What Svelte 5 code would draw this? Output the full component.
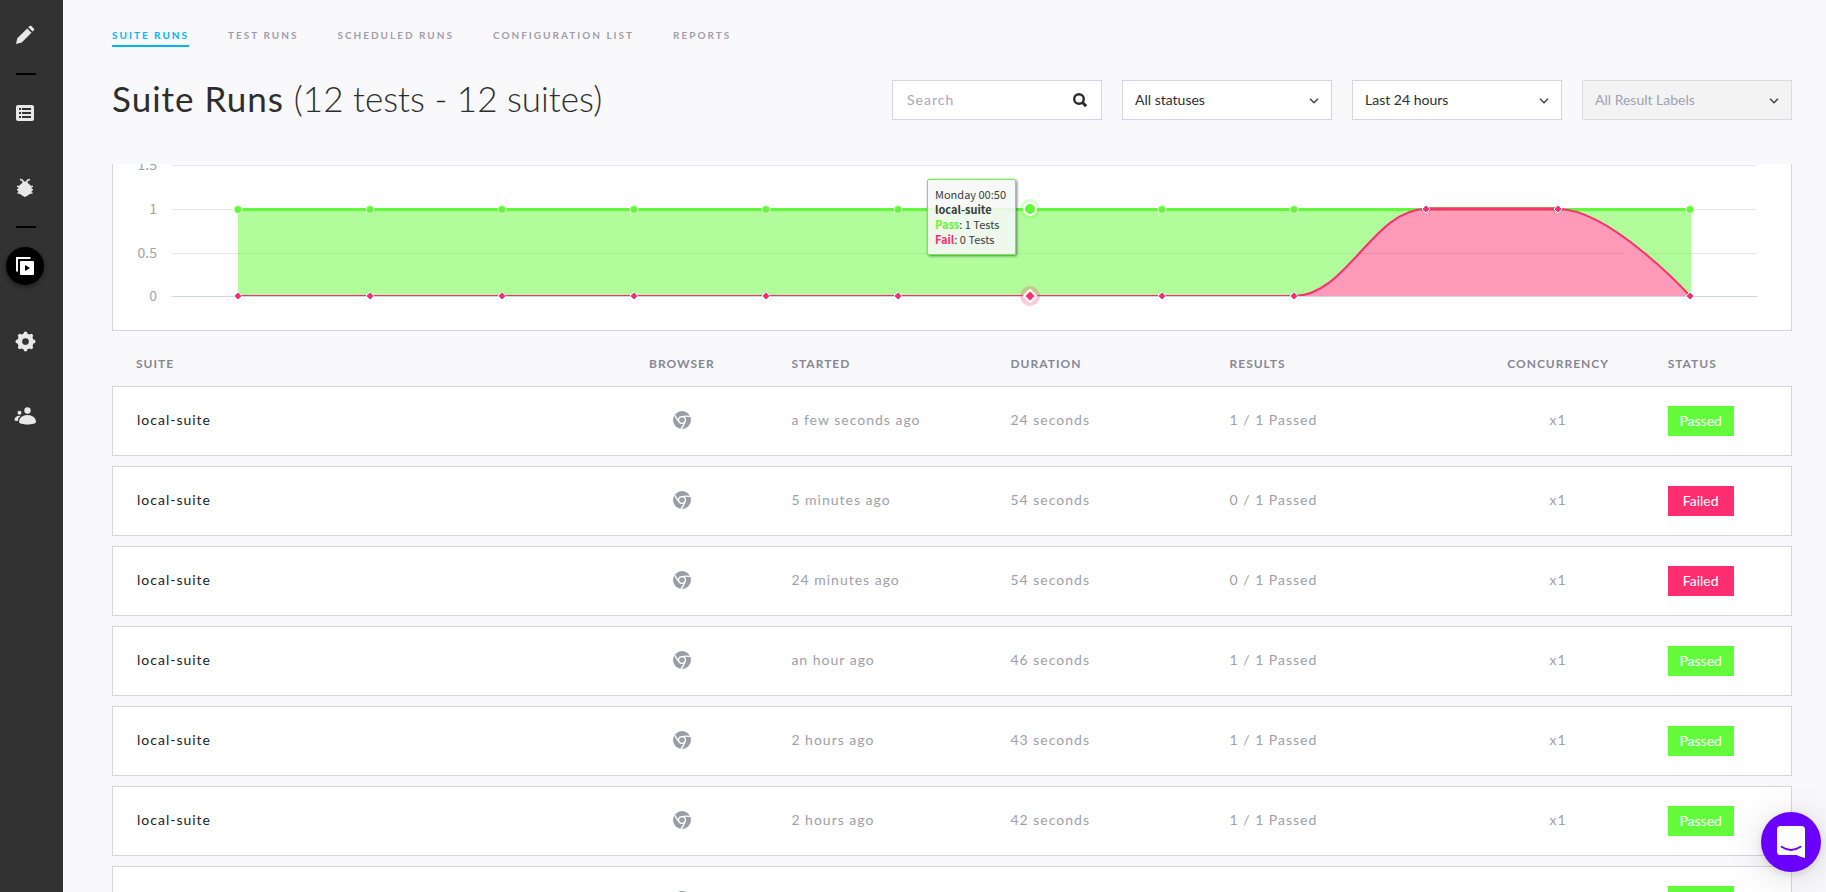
<script>
  const tabs = ['Suite Runs', 'Test Runs', 'Scheduled Runs', 'Configuration List', 'Reports'];

  const runs = [
    { suite: 'local-suite', started: 'a few seconds ago', duration: '24 seconds', results: '1 / 1 Passed', status: 'Passed' },
    { suite: 'local-suite', started: '5 minutes ago', duration: '54 seconds', results: '0 / 1 Passed', status: 'Failed' },
    { suite: 'local-suite', started: '24 minutes ago', duration: '54 seconds', results: '0 / 1 Passed', status: 'Failed' },
    { suite: 'local-suite', started: 'an hour ago', duration: '46 seconds', results: '1 / 1 Passed', status: 'Passed' },
    { suite: 'local-suite', started: '2 hours ago', duration: '43 seconds', results: '1 / 1 Passed', status: 'Passed' },
    { suite: 'local-suite', started: '2 hours ago', duration: '42 seconds', results: '1 / 1 Passed', status: 'Passed' },
    { suite: 'local-suite', started: '3 hours ago', duration: '43 seconds', results: '1 / 1 Passed', status: 'Passed' }
  ];

  // Chart geometry: the plot stretches with the panel, one slot per run.
  const fails = [0, 0, 0, 0, 0, 0, 0, 0, 0, 1, 1, 0];
  const hovered = 6;
  const plotLeft = 59;
  const one = 45;
  const zero = 132;
  const ticks = [
    { label: '1.5', y: 1 },
    { label: '1', y: 45 },
    { label: '0.5', y: 89 },
    { label: '0', y: 132 }
  ];

  let width = $state(1678);
  let plotRight = $derived(width - 34);
  let slot = $derived(Math.floor((plotRight - plotLeft) / fails.length));
  let points = $derived(
    fails.map((f, i) => ({ x: plotLeft + slot * (i + 0.5), y: f ? one : zero }))
  );
  let first = $derived(points[0].x);
  let last = $derived(points[points.length - 1].x);
  let failLine = $derived(
    points
      .map((p, i) => {
        if (i === 0) return `M${p.x} ${p.y}`;
        const q = points[i - 1];
        const c = slot * 0.4;
        const endX = i === points.length - 1 ? p.x : p.x - c;
        return `C${q.x + c} ${q.y} ${endX} ${p.y} ${p.x} ${p.y}`;
      })
      .join(' ')
  );
</script>

<div class="app">
  <nav class="sidebar" aria-label="Main">
    <div class="group">
      <button aria-label="Edit">
        <svg width="20" height="20" viewBox="0 0 20 20"><path fill="#e8e8e8" d="M1 19l1.300-5.800L12.200 3.400l4.300 4.300L6.700 17.500z M13.300 2.300l1.200-1.200q.9-.7 1.800 0l2.500 2.500q.8.9 0 1.800l-1.200 1.200z" /></svg>
      </button>
    </div>
    <hr />
    <div class="group">
      <button aria-label="Tests">
        <svg width="18" height="16" viewBox="0 0 18 16">
          <rect width="18" height="16" rx="2" fill="#e8e8e8" />
          <path stroke="#323232" stroke-width="2" d="M3 4h2M6 4h9M3 8h2M6 8h9M3 12h2M6 12h9" />
          <path stroke="#e8e8e8" d="M5.500 2v12" />
        </svg>
      </button>
      <button aria-label="Bugs">
        <svg width="18" height="20" viewBox="0 0 18 20">
          <path fill="#e8e8e8" d="M9 3.500c2 0 3 1 3.500 2.300C14.500 7 16 9 16 12c0 3.500-4 5.500-7 7-3-1.500-7-3.500-7-7 0-3 1.500-5 3.500-6.200C6 4.500 7 3.500 9 3.500z" />
          <path stroke="#e8e8e8" stroke-width="1.600" fill="none" d="M4 1.500l2 .5 2 2.500M14 1.500l-2 .5-2 2.500M1 8.500h16M1 11.800h16M1.500 15h15" />
        </svg>
      </button>
    </div>
    <hr />
    <div class="group">
      <button class="current" aria-label="Runs">
        <svg width="18" height="18" viewBox="0 0 18 18">
          <path fill="none" stroke="#fff" stroke-width="2" d="M1 14.500V1h13.500" />
          <rect x="4" y="4" width="14" height="14" rx="1" fill="#fff" />
          <path fill="#000" d="M9 8l5 3-5 3z" />
        </svg>
      </button>
      <button aria-label="Settings">
        <svg width="21" height="21" viewBox="0 0 22 22">
          <g stroke="#e8e8e8" fill="none">
            <circle cx="11" cy="11" r="6" stroke-width="5" />
            <path stroke-width="4" stroke-linecap="round" d="M11 2.500v2M11 17.500v2M2.500 11h2M17.500 11h2M5 5l1.500 1.500M15.500 15.500L17 17M17 5l-1.500 1.500M6.500 15.500L5 17" />
          </g>
        </svg>
      </button>
      <button aria-label="Team">
        <svg width="22" height="18" viewBox="0 0 22 18" fill="#e8e8e8">
          <circle cx="13.500" cy="3.500" r="3.200" />
          <path d="M5 15c0-4 3.500-7 8.500-7s8.500 3 8.500 7c0 1.500-4 2.500-8.500 2.500S5 16.500 5 15z" />
          <circle cx="5.500" cy="5.800" r="2" />
          <path d="M.5 13c0-2.500 2-4.300 5-4.300l1 .2C4.800 10.300 4 12 3.800 14 2 14 .5 13.600.5 13z" />
        </svg>
      </button>
    </div>
  </nav>

  <main>
    <nav class="tabs" aria-label="Runs">
      {#each tabs as tab, i}
        <a href="#top" class:active={i === 0}>{tab}</a>
      {/each}
    </nav>

    <header>
      <h1>Suite Runs <span>(12 tests - 12 suites)</span></h1>
      <div class="filters">
        <label class="field">
          <input type="text" placeholder="Search" aria-label="Search" />
          <svg class="glass" width="14" height="14" viewBox="0 0 14 14" fill="none" stroke="#2b2b2b">
            <circle cx="6" cy="6" r="4.800" stroke-width="2.400" /><path stroke-width="3" d="M9.500 9.500l3.700 3.700" />
          </svg>
        </label>
        {#each ['All statuses', 'Last 24 hours', 'All Result Labels'] as name, i}
          <label class="field">
            <select aria-label={name} disabled={i === 2}><option>{name}</option></select>
            <svg class="chevron" width="10" height="6" viewBox="0 0 10 6" fill="none" stroke="#444" stroke-width="1.500"><path d="M1 .8l4 4 4-4" /></svg>
          </label>
        {/each}
      </div>
    </header>

    <div class="scroll">
      <section class="chart" bind:clientWidth={width}>
        <svg height="166" {width} role="img" aria-label="Passed and failed tests">
          {#each ticks as tick, i}
            {#if i < 3}
              <line x1={plotLeft} x2={plotRight} y1={tick.y + 0.5} y2={tick.y + 0.5} stroke="#e6e6e6" />
            {/if}
            <text x="44" y={tick.y + 5} text-anchor="end">{tick.label}</text>
          {/each}

          <path d="M{first} {one}H{last + 1}V{zero}H{first}z" fill="#64fc38" fill-opacity="0.5" />
          <path d="M{first} {one}H{last}" stroke="#62f93a" stroke-width="3" transform="translate(0 .5)" />
          <path d="{failLine}V{zero}H{first}z" fill="#ff9ab8" />
          <line x1={points[8].x + slot / 2} x2={points[11].x - slot / 2} y1="89.500" y2="89.500" stroke="#ee88a8" />
          <path d="M{points[9].x} {one}H{points[10].x}" stroke="#cf7a62" stroke-width="4" />
          <path d={failLine} fill="none" stroke="#ff2e70" stroke-width="2" />
          <line x1={plotLeft} x2={plotRight} y1={zero + 0.5} y2={zero + 0.5} stroke="#ccd6eb" />

          {#each points as p, i}
            {#if p.y === zero}
              {#if i === hovered}
                <circle cx={p.x} cy={one} r="10" fill="#64fc38" fill-opacity="0.25" />
                <circle cx={p.x} cy={one} r="6" fill="#62f93a" stroke="#fff" stroke-width="2" />
              {:else}
                <circle cx={p.x} cy={one + 0.5} r="4" fill="#62f93a" stroke="#fff" stroke-opacity="0.75" />
              {/if}
            {/if}
            {#if i === hovered}
              <circle cx={p.x} cy={p.y} r="10" fill="#ff2e70" fill-opacity="0.25" />
              <path d="M{p.x} {p.y - 6}l6 6-6 6-6-6z" fill="#ff2e70" stroke="#fff" stroke-width="2" />
            {:else}
              <path d="M{p.x} {p.y - 4}l4 4-4 4-4-4z" fill="#ff2e70" stroke="#fff" />
            {/if}
          {/each}
        </svg>
        <div class="tooltip" style:left="{points[hovered].x - 103}px">
          <div>Monday 00:50</div>
          <div><b>local-suite</b></div>
          <div><b class="pass">Pass</b>: 1 Tests</div>
          <div><b class="fail">Fail</b>: 0 Tests</div>
        </div>
      </section>

      <table>
        <colgroup><col class="wide" /><col /><col /><col /><col /><col /><col class="narrow" /></colgroup>
        <thead>
          <tr>
            <th>Suite</th><th class="center">Browser</th><th>Started</th><th>Duration</th><th>Results</th><th class="center">Concurrency</th><th>Status</th>
          </tr>
        </thead>
        <tbody>
          {#each runs as run}
            <tr>
              <td class="suite">{run.suite}</td>
              <td class="center">
                <svg class="browser" width="18" height="18" viewBox="0 0 18 18" role="img" aria-label="Chrome">
                  <circle cx="9" cy="9" r="9" fill="#9a9ca6" />
                  <g fill="none" stroke="#fff" stroke-width="1.300">
                    <circle cx="9" cy="9" r="3.400" />
                    <path d="M9 5.600q4-.9 8-.2M6.100 10.700Q3.200 7.700 1.700 4M11.900 10.700q-1.300 4-3.900 7.300" />
                  </g>
                </svg>
              </td>
              <td>{run.started}</td>
              <td>{run.duration}</td>
              <td>{run.results}</td>
              <td class="center">x1</td>
              <td><span class="badge" class:failed={run.status === 'Failed'}>{run.status}</span></td>
            </tr>
          {/each}
        </tbody>
      </table>
    </div>
  </main>

  <button class="launcher" aria-label="Open chat">
    <svg width="28" height="32" viewBox="0 0 28 32">
      <path fill="#fff" d="M3.500 0h21Q28 0 28 3.500V32q-4.500-1-8.500-3h-16Q0 29 0 25.500v-22Q0 0 3.500 0z" />
      <path fill="none" stroke="#6a00ff" stroke-width="1.800" stroke-linecap="round" d="M4.500 20.800q9.500 6.400 19 0" />
    </svg>
  </button>
</div>

<style>
  :global(body) {
    background: #f9f9fb;
  }
  .app {
    display: flex;
    height: 100vh;
    font-family: Lato, 'Open Sans', sans-serif;
    font-size: 14px;
    color: #2e2e2e;
    background: #f9f9fb;
  }
  button {
    border: 0;
    padding: 0;
    cursor: pointer;
  }
  .sidebar {
    box-sizing: border-box;
    flex: none;
    display: flex;
    flex-direction: column;
    gap: 19px;
    width: 63px;
    padding: 16px 0 0 6px;
    background: #323232;
  }
  .group {
    display: flex;
    flex-direction: column;
    gap: 37px;
  }
  .group button {
    display: flex;
    align-items: center;
    justify-content: center;
    width: 38px;
    height: 38px;
    border-radius: 50%;
    background: none;
  }
  .group .current {
    background: #000;
    box-shadow: 0 2px 5px rgba(0, 0, 0, 0.4);
  }
  hr {
    width: 20px;
    height: 2px;
    margin: 0 10px;
    border: 0;
    background: #000;
  }
  main {
    flex: 1;
    min-width: 0;
    display: flex;
    flex-direction: column;
    padding: 0 34px 0 49px;
  }
  .tabs {
    display: flex;
    gap: 39px;
    padding-top: 28px;
  }
  .tabs a {
    padding-bottom: 3px;
    border-bottom: 2px solid transparent;
    color: #a09eac;
    font-size: 10px;
    font-weight: 700;
    line-height: 14px;
    letter-spacing: 2px;
    text-transform: uppercase;
    text-decoration: none;
  }
  .tabs .active {
    color: #00b4f5;
    border-color: #00b4f5;
  }
  header {
    display: flex;
    align-items: flex-start;
    justify-content: space-between;
    height: 40px;
    padding: 33px 0 44px;
  }
  h1 {
    margin: 0;
    font-size: 35px;
    font-weight: 400;
    line-height: 36px;
    letter-spacing: 1px;
    white-space: nowrap;
  }
  h1 span {
    font-weight: 300;
    letter-spacing: 0;
  }
  .filters {
    display: flex;
    gap: 20px;
  }
  .field {
    position: relative;
    width: 210px;
  }
  input,
  select {
    box-sizing: border-box;
    width: 100%;
    height: 40px;
    padding: 0 12px 2px;
    border: 1px solid #d6d4e4;
    border-radius: 0;
    background: #fff;
    color: #2e2e2e;
    font: inherit;
    appearance: none;
    outline: none;
  }
  input {
    padding: 0 40px 2px 14px;
    letter-spacing: 1px;
  }
  input::placeholder {
    color: #a9a8b6;
  }
  select:disabled {
    background: #f3f3f3;
    border-color: #dcdce0;
    color: #a2a1b0;
    opacity: 1;
  }
  .glass,
  .chevron {
    position: absolute;
    pointer-events: none;
  }
  .glass {
    top: 13px;
    right: 15px;
  }
  .chevron {
    top: 18px;
    right: 13px;
  }
  .scroll {
    flex: 1;
    min-height: 0;
    overflow-y: auto;
    scrollbar-width: none;
  }
  .chart {
    position: relative;
    border: 1px solid #d6d4e4;
    border-top: 0;
    background: #fff;
  }
  .chart svg {
    display: block;
  }
  .chart text {
    font-family: 'Noto Sans CJK JP', 'Open Sans', sans-serif;
    font-size: 14px;
    fill: #a0a3ae;
  }
  .tooltip {
    box-sizing: border-box;
    position: absolute;
    top: 15px;
    width: 89px;
    padding: 7px;
    border: 1px solid #64f53c;
    border-radius: 2px;
    background: rgba(247, 247, 247, 0.87);
    box-shadow: 1px 1px 3px rgba(0, 0, 0, 0.5);
    color: #3c3c3c;
    font-family: 'Noto Sans CJK JP', 'Open Sans', sans-serif;
    font-size: 11px;
    line-height: 15px;
    white-space: nowrap;
  }
  .pass {
    color: #64f53c;
  }
  .fail {
    color: #ff2e70;
  }
  table {
    width: 100%;
    table-layout: fixed;
    border-spacing: 0 10px;
  }
  col {
    width: 13.04%;
  }
  .wide {
    width: 27.4%;
  }
  .narrow {
    width: 7.4%;
  }
  th {
    box-sizing: border-box;
    height: 35px;
    padding: 10px 0 0;
    color: #888694;
    font-size: 12px;
    font-weight: 700;
    letter-spacing: 1px;
    text-align: left;
    text-transform: uppercase;
  }
  td {
    box-sizing: border-box;
    height: 70px;
    padding: 0 0 3px;
    border: solid #d6d4e0;
    border-width: 1px 0;
    background: #fff;
    color: #9f9eaa;
    letter-spacing: 1px;
  }
  th:first-child,
  td:first-child {
    padding-left: 24px;
  }
  td:first-child {
    border-left-width: 1px;
  }
  td:last-child {
    padding-bottom: 0;
    border-right-width: 1px;
  }
  th.center,
  td.center {
    text-align: center;
  }
  td.suite {
    color: #222;
  }
  .browser {
    display: block;
    margin: 0 auto;
  }
  .badge {
    display: block;
    width: 66px;
    background: #62fc3a;
    color: #fff;
    line-height: 30px;
    letter-spacing: 0;
    text-align: center;
  }
  .failed {
    background: #ff2e70;
  }
  .launcher {
    position: fixed;
    right: 5px;
    bottom: 20px;
    display: flex;
    align-items: center;
    justify-content: center;
    width: 60px;
    height: 60px;
    border-radius: 50%;
    background: #6a00ff;
    box-shadow: 0 2px 8px rgba(0, 0, 0, 0.12), 0 4px 40px rgba(0, 0, 0, 0.14);
  }
</style>
